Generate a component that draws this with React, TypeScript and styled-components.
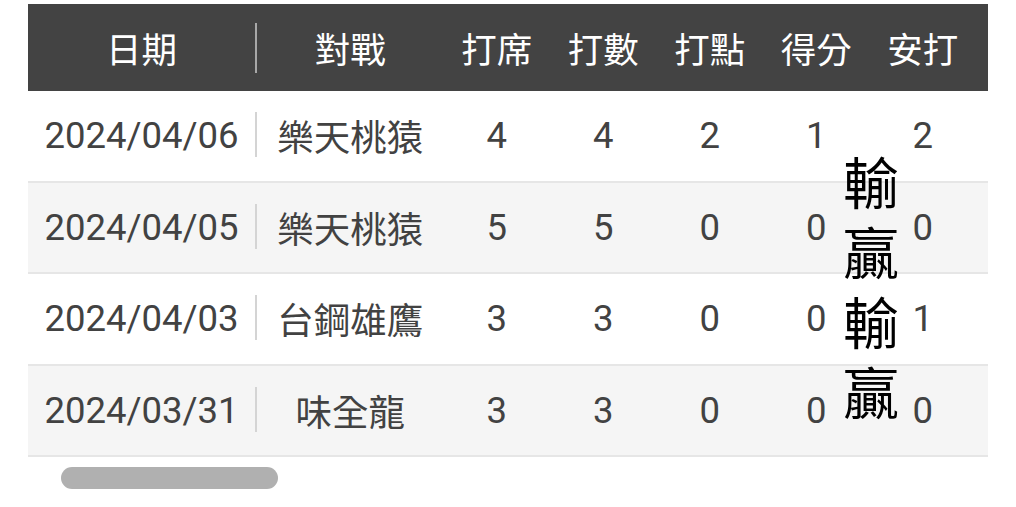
import React from "react";
import styled, { createGlobalStyle } from "styled-components";

const GlobalStyle = createGlobalStyle`
  html, body { margin: 0; padding: 0; background: #ffffff; }
  body {
    font-family: Roboto, "Noto Sans CJK TC", "Noto Sans", sans-serif;
  }
`;

const Page = styled.div`
  padding: 3.5px 0 0 28px;
`;

const TableWrap = styled.div`
  position: relative;
  width: 960px;
`;

const Scroller = styled.div`
  width: 960px;
  overflow: hidden;
`;

const Grid = styled.div`
  display: grid;
  grid-template-columns: 227px 2px 186.5px repeat(5, 106.5px) 120px;
  width: max-content;
`;

const HeaderRow = styled.div`
  display: contents;
`;

const HeadCell = styled.div`
  height: 87.5px;
  background: #434343;
  color: #ffffff;
  font-family: Roboto, "Noto Sans CJK TC", sans-serif;
  font-weight: 400;
  font-size: 35.5px;
  display: flex;
  align-items: center;
  justify-content: center;
  white-space: nowrap;
`;

const Cell = styled.div<{ $alt: boolean }>`
  height: 91.6px;
  box-sizing: border-box;
  border-bottom: 2px solid #e6e6e6;
  background: ${(p) => (p.$alt ? "#f5f5f5" : "#ffffff")};
  color: #424242;
  font-family: Roboto, "Noto Sans CJK TC", sans-serif;
  font-size: 36.5px;
  display: flex;
  align-items: center;
  justify-content: center;
  white-space: nowrap;
`;

const DividerCell = styled.div<{ $alt?: boolean; $head?: boolean }>`
  display: flex;
  align-items: center;
  box-sizing: border-box;
  height: ${(p) => (p.$head ? "87.5px" : "91.6px")};
  background: ${(p) => (p.$head ? "#434343" : p.$alt ? "#f5f5f5" : "#ffffff")};
  border-bottom: ${(p) => (p.$head ? "none" : "2px solid #e6e6e6")};
  &::before {
    content: "";
    display: block;
    width: 2px;
    height: ${(p) => (p.$head ? "50px" : "45px")};
    margin-top: ${(p) => (p.$head ? "2px" : "-2px")};
    background: ${(p) => (p.$head ? "#a8a8a8" : "#d4d4d4")};
  }
`;

const Result = styled.div`
  position: absolute;
  left: 815px;
  top: 141px;
  width: 60px;
  font-family: "Noto Sans CJK TC", sans-serif;
  font-size: 56px;
  line-height: 70px;
  color: #000000;
  word-break: break-all;
`;

const Thumb = styled.div`
  margin: 10px 0 0 33px;
  width: 217px;
  height: 22px;
  border-radius: 11px;
  background: #b0b0b0;
`;

const headers = ["日期", "對戰", "打席", "打數", "打點", "得分", "安打"];

const rows = [
  { date: "2024/04/06", team: "樂天桃猿", v: [4, 4, 2, 1, 2] },
  { date: "2024/04/05", team: "樂天桃猿", v: [5, 5, 0, 0, 0] },
  { date: "2024/04/03", team: "台鋼雄鷹", v: [3, 3, 0, 0, 1] },
  { date: "2024/03/31", team: "味全龍", v: [3, 3, 0, 0, 0] },
];

export default function App() {
  return (
    <Page>
      <GlobalStyle />
      <TableWrap>
        <Scroller>
          <Grid>
            <HeaderRow>
              <HeadCell>{headers[0]}</HeadCell>
              <DividerCell $head />
              {headers.slice(1).map((h) => (
                <HeadCell key={h}>{h}</HeadCell>
              ))}
              <HeadCell />
            </HeaderRow>
            {rows.map((r, i) => {
              const alt = i % 2 === 1;
              return (
                <React.Fragment key={r.date}>
                  <Cell $alt={alt}>{r.date}</Cell>
                  <DividerCell $alt={alt} />
                  <Cell $alt={alt}>{r.team}</Cell>
                  {r.v.map((n, j) => (
                    <Cell $alt={alt} key={j}>
                      {n}
                    </Cell>
                  ))}
                  <Cell $alt={alt} />
                </React.Fragment>
              );
            })}
          </Grid>
        </Scroller>
        <Result>輸贏輸贏</Result>
      </TableWrap>
      <Thumb />
    </Page>
  );
}
